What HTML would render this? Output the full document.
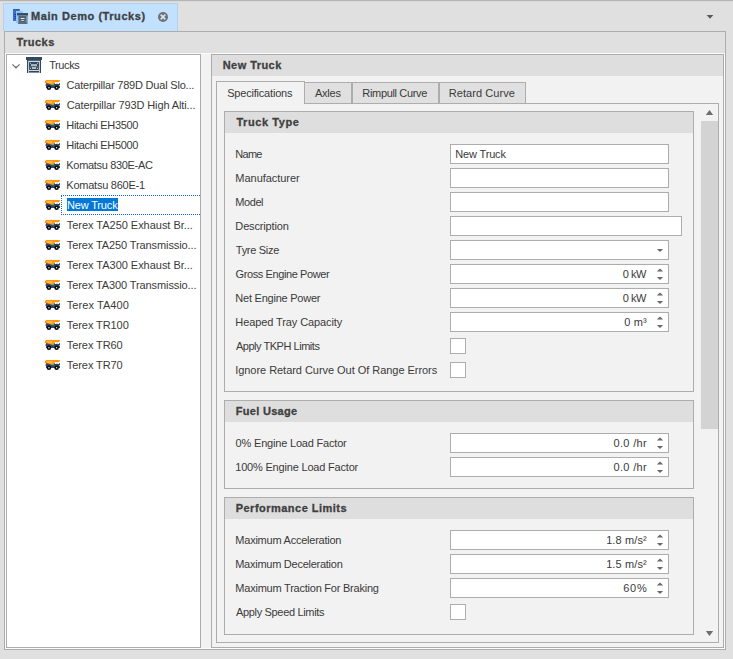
<!DOCTYPE html>
<html lang="en"><head><meta charset="utf-8"><title>Main Demo (Trucks)</title>
<style>
html,body{margin:0;padding:0}
body{width:733px;height:659px;overflow:hidden;background:#e0e0e0;position:relative;
 font-family:"Liberation Sans",sans-serif;font-size:11px;color:#3a3a3a;line-height:13px}
div,span,svg{position:absolute;box-sizing:border-box}
.t{white-space:nowrap;height:13px}
.b{font-weight:bold;color:#404040;-webkit-text-stroke:0.3px #404040}
.bd{border:1px solid #adadad}
.in{border:1px solid #adadad;background:#fff;height:20px}
.cb{border:1px solid #adadad;background:#fff;width:16px;height:16px;left:450px}
.gh{background:#dedede;left:1px;right:1px;top:1px;height:21px}
.r{text-align:right}
</style></head>
<body>
<div style="left:0;top:0;width:733px;height:1px;background:#b4b4b4"></div>
<div style="left:0;top:1px;width:733px;height:1px;background:#dadada"></div>
<div style="left:3px;top:3px;width:175px;height:28px;background:#c2e0ff;border:1px solid #b3d1ee;border-bottom:none"></div>
<svg style="left:12px;top:8px" width="18" height="18" viewBox="12 8 18 18">
<rect x="13" y="9" width="6.7" height="12" fill="#3a6cc3"/>
<rect x="13" y="9" width="6.7" height="1" fill="#2f5fb6"/>
<rect x="14.8" y="14" width="1" height="1" fill="#0d2f9a"/><rect x="14.8" y="16" width="1" height="1" fill="#0d2f9a"/><rect x="14.8" y="18" width="1" height="1" fill="#0d2f9a"/>
<rect x="16" y="11" width="6.7" height="12" fill="#92c2ff"/>
<rect x="18" y="13" width="9.6" height="11" fill="#6f8497"/>
<rect x="17" y="13" width="11" height="2.4" fill="#33506a"/>
<rect x="18" y="15.4" width="9" height="8.6" fill="#7b8ea0"/>
<rect x="19" y="16" width="7" height="7" fill="#4d667e"/>
<rect x="20.7" y="18" width="3.8" height="1" fill="#e8e8e8"/>
<rect x="21.5" y="20" width="2.2" height="1" fill="#e0e0e0"/>
<rect x="19.6" y="20.2" width="0.9" height="1.2" fill="#8a8436"/><rect x="24.6" y="20.2" width="0.9" height="1.2" fill="#8a8436"/>
<rect x="18" y="22.6" width="9" height="1.4" fill="#5a6f84"/>
</svg>
<span id="t0" class="t b" style="left:31.06px;top:10px;letter-spacing:0.56px">Main Demo (Trucks)</span>
<svg style="left:157px;top:11px" width="12" height="12" viewBox="0 0 12 12"><circle cx="6" cy="6" r="5" fill="#707070"/><path d="M3.7 3.7 L8.3 8.3 M8.3 3.7 L3.7 8.3" stroke="#cfe4fb" stroke-width="1.7" stroke-linecap="butt"/></svg>
<svg style="left:706px;top:14px" width="8" height="6" viewBox="0 0 8 6"><path d="M0.6 1.0 H7.4 L4 4.7 Z" fill="#5a5a5a"/></svg>
<div class="bd" style="left:4px;top:31px;width:722px;height:619px;background:#fbfbfb">
<div style="left:0;top:0;width:720px;height:21px;background:#e0e0e0"></div>
<div style="left:1px;top:22px;width:718px;height:594px;background:#f2f2f2"></div>
</div>
<span id="t1" class="t b" style="left:16.40px;top:36px;letter-spacing:0.48px">Trucks</span>
<div class="bd" style="left:6px;top:54px;width:195px;height:594px;background:#fff"></div>
<svg style="left:12px;top:62px" width="10" height="8" viewBox="0 0 10 8"><path d="M0.4 2.3 L4 5.9 L7.6 2.3" fill="none" stroke="#707070" stroke-width="1.15"/><path d="M2.5 4.4 L4 6.6 L5.5 4.4 Z" fill="#707070"/></svg>
<svg style="left:26px;top:57px" width="16" height="16" viewBox="26 57 16 16">
<rect x="28" y="60" width="12" height="13" fill="#d9d6d2"/>
<rect x="26" y="57" width="16" height="3" fill="#2d4a63"/>
<rect x="27" y="60" width="1.1" height="13" fill="#2d4a63"/><rect x="39.9" y="60" width="1.1" height="13" fill="#2d4a63"/>
<rect x="27" y="60" width="14" height="0.8" fill="#2d4a63"/>
<rect x="29" y="62" width="10" height="8" rx="0.8" fill="#2b4a6b"/>
<rect x="31" y="64.3" width="6" height="1.5" fill="#d9d6d2"/>
<rect x="32" y="67.2" width="4" height="1.6" fill="#d9d6d2"/>
<circle cx="30.4" cy="68.4" r="0.7" fill="#f4c83a"/><circle cx="37.6" cy="68.4" r="0.7" fill="#f4c83a"/>
<rect x="30" y="62.8" width="1" height="1" fill="#b9c2cc"/><rect x="37" y="62.8" width="1" height="1" fill="#b9c2cc"/>
<path d="M29.3 67 Q34 65.4 38.7 67" fill="none" stroke="#8fa0b2" stroke-width="0.45"/>
<rect x="29" y="71" width="10" height="1.5" fill="#2b4a6b"/>
</svg>
<span id="t2" class="t" style="left:49.17px;top:59px;letter-spacing:-0.38px">Trucks</span>
<svg style="left:44px;top:79px" width="17" height="12" viewBox="44 79 17 12">
<path d="M46 83 H60 V88 H46 Z" fill="#274a6e"/>
<path d="M46 80 H60 L59.2 82.2 H54.6 L53.6 85.2 L47.5 83.4 L44.4 82.8 Z" fill="#ff9412"/>
<path d="M47 81.3 H52.5 L52.3 83.6 L47.3 82.6 Z" fill="#ffc04a"/>
<rect x="54.8" y="82.7" width="2" height="1.3" fill="#fff"/><rect x="57.2" y="82.7" width="2" height="1.3" fill="#fff"/>
<rect x="45" y="84" width="1" height="2" fill="#f5a0a0"/>
<rect x="59.1" y="85" width="0.85" height="1.2" fill="#d8d820"/>
<circle cx="48.9" cy="87.8" r="2.3" fill="#0a0a0a"/><circle cx="56.6" cy="87.8" r="2.3" fill="#0a0a0a"/>
<circle cx="48.9" cy="87.7" r="0.7" fill="#fff"/><circle cx="56.6" cy="87.7" r="0.7" fill="#fff"/>
</svg>
<span id="t3" class="t" style="left:66.49px;top:79px;letter-spacing:-0.20px">Caterpillar 789D Dual Slo...</span>
<svg style="left:44px;top:99px" width="17" height="12" viewBox="44 79 17 12">
<path d="M46 83 H60 V88 H46 Z" fill="#274a6e"/>
<path d="M46 80 H60 L59.2 82.2 H54.6 L53.6 85.2 L47.5 83.4 L44.4 82.8 Z" fill="#ff9412"/>
<path d="M47 81.3 H52.5 L52.3 83.6 L47.3 82.6 Z" fill="#ffc04a"/>
<rect x="54.8" y="82.7" width="2" height="1.3" fill="#fff"/><rect x="57.2" y="82.7" width="2" height="1.3" fill="#fff"/>
<rect x="45" y="84" width="1" height="2" fill="#f5a0a0"/>
<rect x="59.1" y="85" width="0.85" height="1.2" fill="#d8d820"/>
<circle cx="48.9" cy="87.8" r="2.3" fill="#0a0a0a"/><circle cx="56.6" cy="87.8" r="2.3" fill="#0a0a0a"/>
<circle cx="48.9" cy="87.7" r="0.7" fill="#fff"/><circle cx="56.6" cy="87.7" r="0.7" fill="#fff"/>
</svg>
<span id="t4" class="t" style="left:66.76px;top:99px;letter-spacing:-0.12px">Caterpillar 793D High Alti...</span>
<svg style="left:44px;top:119px" width="17" height="12" viewBox="44 79 17 12">
<path d="M46 83 H60 V88 H46 Z" fill="#274a6e"/>
<path d="M46 80 H60 L59.2 82.2 H54.6 L53.6 85.2 L47.5 83.4 L44.4 82.8 Z" fill="#ff9412"/>
<path d="M47 81.3 H52.5 L52.3 83.6 L47.3 82.6 Z" fill="#ffc04a"/>
<rect x="54.8" y="82.7" width="2" height="1.3" fill="#fff"/><rect x="57.2" y="82.7" width="2" height="1.3" fill="#fff"/>
<rect x="45" y="84" width="1" height="2" fill="#f5a0a0"/>
<rect x="59.1" y="85" width="0.85" height="1.2" fill="#d8d820"/>
<circle cx="48.9" cy="87.8" r="2.3" fill="#0a0a0a"/><circle cx="56.6" cy="87.8" r="2.3" fill="#0a0a0a"/>
<circle cx="48.9" cy="87.7" r="0.7" fill="#fff"/><circle cx="56.6" cy="87.7" r="0.7" fill="#fff"/>
</svg>
<span id="t5" class="t" style="left:66.36px;top:119px;letter-spacing:-0.34px">Hitachi EH3500</span>
<svg style="left:44px;top:139px" width="17" height="12" viewBox="44 79 17 12">
<path d="M46 83 H60 V88 H46 Z" fill="#274a6e"/>
<path d="M46 80 H60 L59.2 82.2 H54.6 L53.6 85.2 L47.5 83.4 L44.4 82.8 Z" fill="#ff9412"/>
<path d="M47 81.3 H52.5 L52.3 83.6 L47.3 82.6 Z" fill="#ffc04a"/>
<rect x="54.8" y="82.7" width="2" height="1.3" fill="#fff"/><rect x="57.2" y="82.7" width="2" height="1.3" fill="#fff"/>
<rect x="45" y="84" width="1" height="2" fill="#f5a0a0"/>
<rect x="59.1" y="85" width="0.85" height="1.2" fill="#d8d820"/>
<circle cx="48.9" cy="87.8" r="2.3" fill="#0a0a0a"/><circle cx="56.6" cy="87.8" r="2.3" fill="#0a0a0a"/>
<circle cx="48.9" cy="87.7" r="0.7" fill="#fff"/><circle cx="56.6" cy="87.7" r="0.7" fill="#fff"/>
</svg>
<span id="t6" class="t" style="left:66.36px;top:139px;letter-spacing:-0.34px">Hitachi EH5000</span>
<svg style="left:44px;top:159px" width="17" height="12" viewBox="44 79 17 12">
<path d="M46 83 H60 V88 H46 Z" fill="#274a6e"/>
<path d="M46 80 H60 L59.2 82.2 H54.6 L53.6 85.2 L47.5 83.4 L44.4 82.8 Z" fill="#ff9412"/>
<path d="M47 81.3 H52.5 L52.3 83.6 L47.3 82.6 Z" fill="#ffc04a"/>
<rect x="54.8" y="82.7" width="2" height="1.3" fill="#fff"/><rect x="57.2" y="82.7" width="2" height="1.3" fill="#fff"/>
<rect x="45" y="84" width="1" height="2" fill="#f5a0a0"/>
<rect x="59.1" y="85" width="0.85" height="1.2" fill="#d8d820"/>
<circle cx="48.9" cy="87.8" r="2.3" fill="#0a0a0a"/><circle cx="56.6" cy="87.8" r="2.3" fill="#0a0a0a"/>
<circle cx="48.9" cy="87.7" r="0.7" fill="#fff"/><circle cx="56.6" cy="87.7" r="0.7" fill="#fff"/>
</svg>
<span id="t7" class="t" style="left:66.36px;top:159px;letter-spacing:-0.33px">Komatsu 830E-AC</span>
<svg style="left:44px;top:179px" width="17" height="12" viewBox="44 79 17 12">
<path d="M46 83 H60 V88 H46 Z" fill="#274a6e"/>
<path d="M46 80 H60 L59.2 82.2 H54.6 L53.6 85.2 L47.5 83.4 L44.4 82.8 Z" fill="#ff9412"/>
<path d="M47 81.3 H52.5 L52.3 83.6 L47.3 82.6 Z" fill="#ffc04a"/>
<rect x="54.8" y="82.7" width="2" height="1.3" fill="#fff"/><rect x="57.2" y="82.7" width="2" height="1.3" fill="#fff"/>
<rect x="45" y="84" width="1" height="2" fill="#f5a0a0"/>
<rect x="59.1" y="85" width="0.85" height="1.2" fill="#d8d820"/>
<circle cx="48.9" cy="87.8" r="2.3" fill="#0a0a0a"/><circle cx="56.6" cy="87.8" r="2.3" fill="#0a0a0a"/>
<circle cx="48.9" cy="87.7" r="0.7" fill="#fff"/><circle cx="56.6" cy="87.7" r="0.7" fill="#fff"/>
</svg>
<span id="t8" class="t" style="left:66.36px;top:179px;letter-spacing:-0.25px">Komatsu 860E-1</span>
<svg style="left:44px;top:199px" width="17" height="12" viewBox="44 79 17 12">
<path d="M46 83 H60 V88 H46 Z" fill="#274a6e"/>
<path d="M46 80 H60 L59.2 82.2 H54.6 L53.6 85.2 L47.5 83.4 L44.4 82.8 Z" fill="#ff9412"/>
<path d="M47 81.3 H52.5 L52.3 83.6 L47.3 82.6 Z" fill="#ffc04a"/>
<rect x="54.8" y="82.7" width="2" height="1.3" fill="#fff"/><rect x="57.2" y="82.7" width="2" height="1.3" fill="#fff"/>
<rect x="45" y="84" width="1" height="2" fill="#f5a0a0"/>
<rect x="59.1" y="85" width="0.85" height="1.2" fill="#d8d820"/>
<circle cx="48.9" cy="87.8" r="2.3" fill="#0a0a0a"/><circle cx="56.6" cy="87.8" r="2.3" fill="#0a0a0a"/>
<circle cx="48.9" cy="87.7" r="0.7" fill="#fff"/><circle cx="56.6" cy="87.7" r="0.7" fill="#fff"/>
</svg>
<div style="left:61px;top:195px;width:139px;height:20px;border:1px dotted #1464d2;border-right:none"></div>
<div style="left:67px;top:198px;width:51px;height:13px;background:#0078d7"></div>
<span id="t9" class="t" style="left:66.91px;top:199px;letter-spacing:-0.15px;color:#fff">New Truck</span>
<svg style="left:44px;top:219px" width="17" height="12" viewBox="44 79 17 12">
<path d="M46 83 H60 V88 H46 Z" fill="#274a6e"/>
<path d="M46 80 H60 L59.2 82.2 H54.6 L53.6 85.2 L47.5 83.4 L44.4 82.8 Z" fill="#ff9412"/>
<path d="M47 81.3 H52.5 L52.3 83.6 L47.3 82.6 Z" fill="#ffc04a"/>
<rect x="54.8" y="82.7" width="2" height="1.3" fill="#fff"/><rect x="57.2" y="82.7" width="2" height="1.3" fill="#fff"/>
<rect x="45" y="84" width="1" height="2" fill="#f5a0a0"/>
<rect x="59.1" y="85" width="0.85" height="1.2" fill="#d8d820"/>
<circle cx="48.9" cy="87.8" r="2.3" fill="#0a0a0a"/><circle cx="56.6" cy="87.8" r="2.3" fill="#0a0a0a"/>
<circle cx="48.9" cy="87.7" r="0.7" fill="#fff"/><circle cx="56.6" cy="87.7" r="0.7" fill="#fff"/>
</svg>
<span id="t10" class="t" style="left:66.80px;top:219px;letter-spacing:-0.03px">Terex TA250 Exhaust Br...</span>
<svg style="left:44px;top:239px" width="17" height="12" viewBox="44 79 17 12">
<path d="M46 83 H60 V88 H46 Z" fill="#274a6e"/>
<path d="M46 80 H60 L59.2 82.2 H54.6 L53.6 85.2 L47.5 83.4 L44.4 82.8 Z" fill="#ff9412"/>
<path d="M47 81.3 H52.5 L52.3 83.6 L47.3 82.6 Z" fill="#ffc04a"/>
<rect x="54.8" y="82.7" width="2" height="1.3" fill="#fff"/><rect x="57.2" y="82.7" width="2" height="1.3" fill="#fff"/>
<rect x="45" y="84" width="1" height="2" fill="#f5a0a0"/>
<rect x="59.1" y="85" width="0.85" height="1.2" fill="#d8d820"/>
<circle cx="48.9" cy="87.8" r="2.3" fill="#0a0a0a"/><circle cx="56.6" cy="87.8" r="2.3" fill="#0a0a0a"/>
<circle cx="48.9" cy="87.7" r="0.7" fill="#fff"/><circle cx="56.6" cy="87.7" r="0.7" fill="#fff"/>
</svg>
<span id="t11" class="t" style="left:66.80px;top:239px;letter-spacing:-0.10px">Terex TA250 Transmissio...</span>
<svg style="left:44px;top:259px" width="17" height="12" viewBox="44 79 17 12">
<path d="M46 83 H60 V88 H46 Z" fill="#274a6e"/>
<path d="M46 80 H60 L59.2 82.2 H54.6 L53.6 85.2 L47.5 83.4 L44.4 82.8 Z" fill="#ff9412"/>
<path d="M47 81.3 H52.5 L52.3 83.6 L47.3 82.6 Z" fill="#ffc04a"/>
<rect x="54.8" y="82.7" width="2" height="1.3" fill="#fff"/><rect x="57.2" y="82.7" width="2" height="1.3" fill="#fff"/>
<rect x="45" y="84" width="1" height="2" fill="#f5a0a0"/>
<rect x="59.1" y="85" width="0.85" height="1.2" fill="#d8d820"/>
<circle cx="48.9" cy="87.8" r="2.3" fill="#0a0a0a"/><circle cx="56.6" cy="87.8" r="2.3" fill="#0a0a0a"/>
<circle cx="48.9" cy="87.7" r="0.7" fill="#fff"/><circle cx="56.6" cy="87.7" r="0.7" fill="#fff"/>
</svg>
<span id="t12" class="t" style="left:66.80px;top:259px;letter-spacing:-0.03px">Terex TA300 Exhaust Br...</span>
<svg style="left:44px;top:279px" width="17" height="12" viewBox="44 79 17 12">
<path d="M46 83 H60 V88 H46 Z" fill="#274a6e"/>
<path d="M46 80 H60 L59.2 82.2 H54.6 L53.6 85.2 L47.5 83.4 L44.4 82.8 Z" fill="#ff9412"/>
<path d="M47 81.3 H52.5 L52.3 83.6 L47.3 82.6 Z" fill="#ffc04a"/>
<rect x="54.8" y="82.7" width="2" height="1.3" fill="#fff"/><rect x="57.2" y="82.7" width="2" height="1.3" fill="#fff"/>
<rect x="45" y="84" width="1" height="2" fill="#f5a0a0"/>
<rect x="59.1" y="85" width="0.85" height="1.2" fill="#d8d820"/>
<circle cx="48.9" cy="87.8" r="2.3" fill="#0a0a0a"/><circle cx="56.6" cy="87.8" r="2.3" fill="#0a0a0a"/>
<circle cx="48.9" cy="87.7" r="0.7" fill="#fff"/><circle cx="56.6" cy="87.7" r="0.7" fill="#fff"/>
</svg>
<span id="t13" class="t" style="left:66.80px;top:279px;letter-spacing:-0.10px">Terex TA300 Transmissio...</span>
<svg style="left:44px;top:299px" width="17" height="12" viewBox="44 79 17 12">
<path d="M46 83 H60 V88 H46 Z" fill="#274a6e"/>
<path d="M46 80 H60 L59.2 82.2 H54.6 L53.6 85.2 L47.5 83.4 L44.4 82.8 Z" fill="#ff9412"/>
<path d="M47 81.3 H52.5 L52.3 83.6 L47.3 82.6 Z" fill="#ffc04a"/>
<rect x="54.8" y="82.7" width="2" height="1.3" fill="#fff"/><rect x="57.2" y="82.7" width="2" height="1.3" fill="#fff"/>
<rect x="45" y="84" width="1" height="2" fill="#f5a0a0"/>
<rect x="59.1" y="85" width="0.85" height="1.2" fill="#d8d820"/>
<circle cx="48.9" cy="87.8" r="2.3" fill="#0a0a0a"/><circle cx="56.6" cy="87.8" r="2.3" fill="#0a0a0a"/>
<circle cx="48.9" cy="87.7" r="0.7" fill="#fff"/><circle cx="56.6" cy="87.7" r="0.7" fill="#fff"/>
</svg>
<span id="t14" class="t" style="left:66.80px;top:299px;letter-spacing:0.06px">Terex TA400</span>
<svg style="left:44px;top:319px" width="17" height="12" viewBox="44 79 17 12">
<path d="M46 83 H60 V88 H46 Z" fill="#274a6e"/>
<path d="M46 80 H60 L59.2 82.2 H54.6 L53.6 85.2 L47.5 83.4 L44.4 82.8 Z" fill="#ff9412"/>
<path d="M47 81.3 H52.5 L52.3 83.6 L47.3 82.6 Z" fill="#ffc04a"/>
<rect x="54.8" y="82.7" width="2" height="1.3" fill="#fff"/><rect x="57.2" y="82.7" width="2" height="1.3" fill="#fff"/>
<rect x="45" y="84" width="1" height="2" fill="#f5a0a0"/>
<rect x="59.1" y="85" width="0.85" height="1.2" fill="#d8d820"/>
<circle cx="48.9" cy="87.8" r="2.3" fill="#0a0a0a"/><circle cx="56.6" cy="87.8" r="2.3" fill="#0a0a0a"/>
<circle cx="48.9" cy="87.7" r="0.7" fill="#fff"/><circle cx="56.6" cy="87.7" r="0.7" fill="#fff"/>
</svg>
<span id="t15" class="t" style="left:66.80px;top:319px;letter-spacing:-0.08px">Terex TR100</span>
<svg style="left:44px;top:339px" width="17" height="12" viewBox="44 79 17 12">
<path d="M46 83 H60 V88 H46 Z" fill="#274a6e"/>
<path d="M46 80 H60 L59.2 82.2 H54.6 L53.6 85.2 L47.5 83.4 L44.4 82.8 Z" fill="#ff9412"/>
<path d="M47 81.3 H52.5 L52.3 83.6 L47.3 82.6 Z" fill="#ffc04a"/>
<rect x="54.8" y="82.7" width="2" height="1.3" fill="#fff"/><rect x="57.2" y="82.7" width="2" height="1.3" fill="#fff"/>
<rect x="45" y="84" width="1" height="2" fill="#f5a0a0"/>
<rect x="59.1" y="85" width="0.85" height="1.2" fill="#d8d820"/>
<circle cx="48.9" cy="87.8" r="2.3" fill="#0a0a0a"/><circle cx="56.6" cy="87.8" r="2.3" fill="#0a0a0a"/>
<circle cx="48.9" cy="87.7" r="0.7" fill="#fff"/><circle cx="56.6" cy="87.7" r="0.7" fill="#fff"/>
</svg>
<span id="t16" class="t" style="left:66.80px;top:339px;letter-spacing:-0.08px">Terex TR60</span>
<svg style="left:44px;top:359px" width="17" height="12" viewBox="44 79 17 12">
<path d="M46 83 H60 V88 H46 Z" fill="#274a6e"/>
<path d="M46 80 H60 L59.2 82.2 H54.6 L53.6 85.2 L47.5 83.4 L44.4 82.8 Z" fill="#ff9412"/>
<path d="M47 81.3 H52.5 L52.3 83.6 L47.3 82.6 Z" fill="#ffc04a"/>
<rect x="54.8" y="82.7" width="2" height="1.3" fill="#fff"/><rect x="57.2" y="82.7" width="2" height="1.3" fill="#fff"/>
<rect x="45" y="84" width="1" height="2" fill="#f5a0a0"/>
<rect x="59.1" y="85" width="0.85" height="1.2" fill="#d8d820"/>
<circle cx="48.9" cy="87.8" r="2.3" fill="#0a0a0a"/><circle cx="56.6" cy="87.8" r="2.3" fill="#0a0a0a"/>
<circle cx="48.9" cy="87.7" r="0.7" fill="#fff"/><circle cx="56.6" cy="87.7" r="0.7" fill="#fff"/>
</svg>
<span id="t17" class="t" style="left:66.80px;top:359px;letter-spacing:-0.08px">Terex TR70</span>
<div class="bd" style="left:211px;top:54px;width:513px;height:594px;background:#f2f2f2"><div class="gh" style="left:0;right:0;top:0"></div></div>
<span id="t18" class="t b" style="left:222.70px;top:59px;letter-spacing:0.45px">New Truck</span>
<div class="bd" style="left:216px;top:103px;width:503px;height:540px;background:#f2f2f2"></div>
<div class="bd" style="left:216px;top:81px;width:89px;height:23px;background:#f2f2f2;border-bottom:none"></div>
<div class="bd" style="left:305px;top:82px;width:47px;height:22px;background:#e0e0e0;border-left:none"></div>
<div class="bd" style="left:352px;top:82px;width:87px;height:22px;background:#e0e0e0"></div>
<div class="bd" style="left:439px;top:82px;width:87px;height:22px;background:#e0e0e0"></div>
<span id="t19" class="t" style="left:227.13px;top:87px;letter-spacing:-0.19px">Specifications</span>
<span id="t20" class="t" style="left:314.96px;top:87px;letter-spacing:-0.23px">Axles</span>
<span id="t21" class="t" style="left:362.36px;top:87px;letter-spacing:-0.34px">Rimpull Curve</span>
<span id="t22" class="t" style="left:448.74px;top:87px;letter-spacing:0.06px">Retard Curve</span>
<svg style="left:705px;top:109px" width="9" height="7" viewBox="0 0 9 7"><path d="M4.5 1 L8.2 6 H0.8 Z" fill="#6e6e6e"/></svg>
<div style="left:701px;top:121px;width:17px;height:308px;background:#d3d3d3"></div>
<svg style="left:705px;top:630px" width="9" height="7" viewBox="0 0 9 7"><path d="M0.8 1 H8.2 L4.5 6 Z" fill="#6e6e6e"/></svg>
<div class="bd" style="left:224px;top:111px;width:470px;height:281px"><div class="gh" style="left:0;right:0;top:0"></div></div>
<span id="t23" class="t b" style="left:236.40px;top:116px;letter-spacing:0.58px">Truck Type</span>
<span id="t24" class="t" style="left:235.27px;top:148px;letter-spacing:-0.72px">Name</span>
<div class="in" style="left:450px;top:144px;width:219px"></div>
<span id="t25" class="t" style="left:455.21px;top:148px;letter-spacing:-0.15px">New Truck</span>
<span id="t26" class="t" style="left:235.36px;top:172px;letter-spacing:-0.04px">Manufacturer</span>
<div class="in" style="left:450px;top:168px;width:219px"></div>
<span id="t27" class="t" style="left:235.29px;top:196px;letter-spacing:-0.43px">Model</span>
<div class="in" style="left:450px;top:192px;width:219px"></div>
<span id="t28" class="t" style="left:235.36px;top:220px;letter-spacing:-0.16px">Description</span>
<div class="in" style="left:450px;top:216px;width:232px"></div>
<span id="t29" class="t" style="left:235.82px;top:244px;letter-spacing:-0.29px">Tyre Size</span>
<div class="in" style="left:450px;top:240px;width:219px"></div>
<svg style="left:656px;top:249px" width="8" height="4" viewBox="0 0 8 4"><path d="M0.8 -0.1 H7.2 L4 3.1 Z" fill="#686868"/></svg>
<span id="t30" class="t" style="left:235.48px;top:268px;letter-spacing:-0.39px">Gross Engine Power</span>
<div class="in" style="left:450px;top:264px;width:219px"></div>
<span id="t31" class="t" style="left:622.70px;top:268px;letter-spacing:-0.43px">0 kW</span>
<svg style="left:656px;top:268px" width="8" height="4" viewBox="0 0 8 4"><path d="M4 0.4 L7.2 3.6 H0.8 Z" fill="#686868"/></svg>
<svg style="left:656px;top:277px" width="8" height="4" viewBox="0 0 8 4"><path d="M0.8 -0.1 H7.2 L4 3.1 Z" fill="#686868"/></svg>
<span id="t32" class="t" style="left:235.36px;top:292px;letter-spacing:-0.24px">Net Engine Power</span>
<div class="in" style="left:450px;top:288px;width:219px"></div>
<span id="t33" class="t" style="left:622.70px;top:292px;letter-spacing:-0.43px">0 kW</span>
<svg style="left:656px;top:292px" width="8" height="4" viewBox="0 0 8 4"><path d="M4 0.4 L7.2 3.6 H0.8 Z" fill="#686868"/></svg>
<svg style="left:656px;top:301px" width="8" height="4" viewBox="0 0 8 4"><path d="M0.8 -0.1 H7.2 L4 3.1 Z" fill="#686868"/></svg>
<span id="t34" class="t" style="left:235.36px;top:316px;letter-spacing:-0.10px">Heaped Tray Capacity</span>
<div class="in" style="left:450px;top:312px;width:219px"></div>
<span id="t35" class="t" style="left:624.32px;top:316px;letter-spacing:0.08px">0 m³</span>
<svg style="left:656px;top:316px" width="8" height="4" viewBox="0 0 8 4"><path d="M4 0.4 L7.2 3.6 H0.8 Z" fill="#686868"/></svg>
<svg style="left:656px;top:325px" width="8" height="4" viewBox="0 0 8 4"><path d="M0.8 -0.1 H7.2 L4 3.1 Z" fill="#686868"/></svg>
<span id="t36" class="t" style="left:235.96px;top:340px;letter-spacing:-0.47px">Apply TKPH Limits</span>
<div class="cb" style="top:338px"></div>
<span id="t37" class="t" style="left:235.18px;top:364px;letter-spacing:-0.04px">Ignore Retard Curve Out Of Range Errors</span>
<div class="cb" style="top:362px"></div>
<div class="bd" style="left:224px;top:400px;width:470px;height:89px"><div class="gh" style="left:0;right:0;top:0"></div></div>
<span id="t38" class="t b" style="left:235.71px;top:405px;letter-spacing:0.31px">Fuel Usage</span>
<span id="t39" class="t" style="left:235.62px;top:437px;letter-spacing:-0.19px">0% Engine Load Factor</span>
<div class="in" style="left:450px;top:433px;width:219px"></div>
<span id="t40" class="t" style="left:613.57px;top:437px;letter-spacing:0.31px">0.0 /hr</span>
<svg style="left:656px;top:437px" width="8" height="4" viewBox="0 0 8 4"><path d="M4 0.4 L7.2 3.6 H0.8 Z" fill="#686868"/></svg>
<svg style="left:656px;top:446px" width="8" height="4" viewBox="0 0 8 4"><path d="M0.8 -0.1 H7.2 L4 3.1 Z" fill="#686868"/></svg>
<span id="t41" class="t" style="left:235.24px;top:461px;letter-spacing:-0.19px">100% Engine Load Factor</span>
<div class="in" style="left:450px;top:457px;width:219px"></div>
<span id="t42" class="t" style="left:613.57px;top:461px;letter-spacing:0.31px">0.0 /hr</span>
<svg style="left:656px;top:461px" width="8" height="4" viewBox="0 0 8 4"><path d="M4 0.4 L7.2 3.6 H0.8 Z" fill="#686868"/></svg>
<svg style="left:656px;top:470px" width="8" height="4" viewBox="0 0 8 4"><path d="M0.8 -0.1 H7.2 L4 3.1 Z" fill="#686868"/></svg>
<div class="bd" style="left:224px;top:497px;width:470px;height:138px"><div class="gh" style="left:0;right:0;top:0"></div></div>
<span id="t43" class="t b" style="left:235.71px;top:502px;letter-spacing:0.48px">Performance Limits</span>
<span id="t44" class="t" style="left:235.36px;top:534px;letter-spacing:-0.24px">Maximum Acceleration</span>
<div class="in" style="left:450px;top:530px;width:219px"></div>
<span id="t45" class="t" style="left:606.13px;top:534px;letter-spacing:0.12px">1.8 m/s²</span>
<svg style="left:656px;top:534px" width="8" height="4" viewBox="0 0 8 4"><path d="M4 0.4 L7.2 3.6 H0.8 Z" fill="#686868"/></svg>
<svg style="left:656px;top:543px" width="8" height="4" viewBox="0 0 8 4"><path d="M0.8 -0.1 H7.2 L4 3.1 Z" fill="#686868"/></svg>
<span id="t46" class="t" style="left:235.22px;top:558px;letter-spacing:-0.26px">Maximum Deceleration</span>
<div class="in" style="left:450px;top:554px;width:219px"></div>
<span id="t47" class="t" style="left:606.13px;top:558px;letter-spacing:0.12px">1.5 m/s²</span>
<svg style="left:656px;top:558px" width="8" height="4" viewBox="0 0 8 4"><path d="M4 0.4 L7.2 3.6 H0.8 Z" fill="#686868"/></svg>
<svg style="left:656px;top:567px" width="8" height="4" viewBox="0 0 8 4"><path d="M0.8 -0.1 H7.2 L4 3.1 Z" fill="#686868"/></svg>
<span id="t48" class="t" style="left:235.36px;top:582px;letter-spacing:-0.23px">Maximum Traction For Braking</span>
<div class="in" style="left:450px;top:578px;width:219px"></div>
<span id="t49" class="t" style="left:623.28px;top:582px;letter-spacing:0.74px">60%</span>
<svg style="left:656px;top:582px" width="8" height="4" viewBox="0 0 8 4"><path d="M4 0.4 L7.2 3.6 H0.8 Z" fill="#686868"/></svg>
<svg style="left:656px;top:591px" width="8" height="4" viewBox="0 0 8 4"><path d="M0.8 -0.1 H7.2 L4 3.1 Z" fill="#686868"/></svg>
<span id="t50" class="t" style="left:235.96px;top:606px;letter-spacing:-0.33px">Apply Speed Limits</span>
<div class="cb" style="top:604px"></div>
</body></html>
